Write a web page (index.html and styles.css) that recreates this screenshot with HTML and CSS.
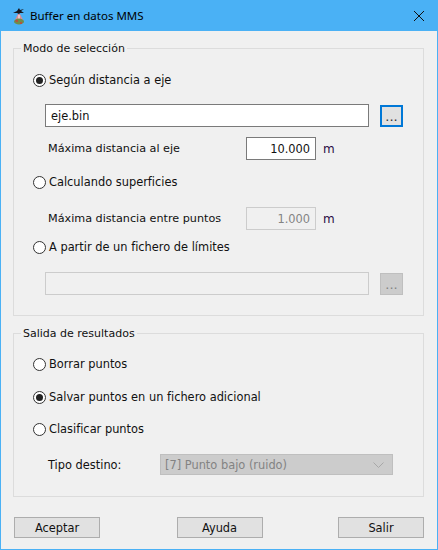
FILE: index.html
```html
<!DOCTYPE html>
<html lang="es">
<head>
<meta charset="utf-8">
<title>Buffer en datos MMS</title>
<link rel="stylesheet" href="styles.css">
</head>
<body>
<div class="window">
  <header class="titlebar">
    <svg class="app-icon" width="16" height="18" viewBox="0 0 16 18">
      <path d="M2 6 L6 4 L8 1 L9 3 L13 2 L10 4 L13 6 L9 6 L8 7 L6 6 Z" fill="#16161c"/>
      <path d="M7 7 L9 7 L12 13 L4 13 Z" fill="#dc8c96"/>
      <path d="M7 8 L9 8 L9 12 L7 12 Z" fill="#e8c4c8"/>
      <ellipse cx="8" cy="14.5" rx="5" ry="3" fill="#6f8c4a"/>
      <path d="M4 13 h3 v2 h-2 Z M9 15 h2 v2 h-2 Z" fill="#b5533c"/>
    </svg>
    <span class="title">Buffer en datos MMS</span>
    <svg class="close" width="12" height="12" viewBox="0 0 12 12">
      <path d="M1 1 L11 11 M11 1 L1 11" stroke="#111" stroke-width="1" fill="none"/>
    </svg>
  </header>
  <main class="content">
    <section class="group group-mode">
      <span class="legend">Modo de selección</span>
      <label class="radio-row first"><span class="radio on"></span>Según distancia a eje</label>
      <div class="file-row after-radio-a"><input class="text file" value="eje.bin"><button class="dots focus">...</button></div>
      <div class="value-row dist-a"><span class="value-label">Máxima distancia al eje</span><input class="text number" value="10.000"><span class="unit">m</span></div>
      <label class="radio-row calc"><span class="radio"></span>Calculando superficies</label>
      <div class="value-row dist-b"><span class="value-label">Máxima distancia entre puntos</span><input class="text number disabled" value="1.000" disabled><span class="unit">m</span></div>
      <label class="radio-row limits"><span class="radio"></span>A partir de un fichero de límites</label>
      <div class="file-row after-radio-b"><input class="text file disabled" disabled><button class="dots off" disabled>...</button></div>
    </section>
    <section class="group group-out">
      <span class="legend">Salida de resultados</span>
      <label class="radio-row first-out"><span class="radio"></span>Borrar puntos</label>
      <label class="radio-row save"><span class="radio on"></span>Salvar puntos en un fichero adicional</label>
      <label class="radio-row classify"><span class="radio"></span>Clasificar puntos</label>
      <div class="type-row">
        <span class="type-label">Tipo destino:</span>
        <div class="combo"><span>[7] Punto bajo (ruido)</span>
          <svg width="11" height="6" viewBox="0 0 11 6"><path d="M0.5 0.5 L5.5 5.5 L10.5 0.5" stroke="#a8a8a8" fill="none"/></svg>
        </div>
      </div>
    </section>
    <footer class="actions">
      <button class="action">Aceptar</button>
      <button class="action middle">Ayuda</button>
      <button class="action">Salir</button>
    </footer>
  </main>
</div>
</body>
</html>
```
FILE: styles.css
```css
* { box-sizing: border-box; }
html, body { margin: 0; padding: 0; }
body { width: 438px; height: 550px; overflow: hidden; font-family: "DejaVu Sans", sans-serif; font-size: 11.4px; color: #111; }
.window { width: 438px; height: 550px; display: flex; flex-direction: column; border: 1px solid #4ab1f5; border-top: 0; background: #f0f0f0; }
.titlebar { height: 31px; flex: none; background: #4ab1f5; display: flex; align-items: center; padding: 0 10px 0 11px; margin: 0 -1px; }
.app-icon { flex: none; margin-right: 3px; }
.title { flex: 1; font-family: "Noto Sans", sans-serif; font-size: 11.5px; color: #000; }
.close { flex: none; margin-right: 3px; }
.content { flex: 1; padding: 17px 13px 0 12px; display: flex; flex-direction: column; }
.group { position: relative; border: 1px solid #dcdcdc; width: 411px; flex: none; }
.group-mode { height: 268px; padding: 23px 0 0 19px; }
.group-out { height: 164px; margin-top: 17px; padding: 22px 0 0 19px; }
.legend { position: absolute; left: 7px; top: -8px; padding: 0 2px; height: 15px; line-height: 15px; background: #f0f0f0; font-size: 11px; }
.radio-row { display: flex; align-items: center; height: 16px; }
.radio { width: 13px; height: 13px; border-radius: 50%; border: 1px solid #333; background: #fff; margin-right: 3px; display: flex; align-items: center; justify-content: center; flex: none; }
.radio.on::after { content: ""; width: 7px; height: 7px; border-radius: 50%; background: #222; }
.file-row { display: flex; align-items: center; margin-left: 12px; height: 23px; }
.after-radio-a { margin-top: 16px; }
.after-radio-b { margin-top: 17px; }
.text { font: inherit; color: #111; border: 1px solid #7a7a7a; background: #fff; outline: 0; height: 23px; padding: 0 5px; }
.file { width: 324px; }
.dots { font-family: inherit; font-size: 13px; line-height: 1; width: 23px; height: 22px; margin-left: 11px; padding: 2px 0 0; background: #e1e1e1; border: 2px solid #0078d7; color: #333; }
.dots.off { border: 1px solid #bfbfbf; background: #cccccc; color: #838383; }
.value-row { display: flex; align-items: center; margin-left: 15px; height: 23px; }
.dist-a { margin-top: 10px; }
.dist-b { margin-top: 17px; }
.calc { margin-top: 14px; }
.limits { margin-top: 9px; }
.value-label { width: 198px; flex: none; font-size: 11.2px; }
.number { width: 70px; text-align: right; padding-right: 5px; }
.disabled { background: #f0f0f0; border-color: #cccccc; color: #838383; -webkit-text-fill-color: #838383; opacity: 1; }
.unit { margin-left: 7px; color: #2a0a45; font-size: 12px; }
.save { margin-top: 17px; }
.classify { margin-top: 16px; }
.type-row { display: flex; align-items: center; margin-top: 17px; margin-left: 15px; height: 21px; }
.type-label { width: 112px; flex: none; }
.combo { width: 233px; height: 21px; background: #cccccc; border: 1px solid #bfbfbf; color: #838383; display: flex; align-items: center; justify-content: space-between; padding: 0 8px 0 4px; }
.actions { display: flex; justify-content: space-between; margin-top: 20px; padding-left: 1px; width: 411px; }
.action { font: inherit; width: 86px; height: 21px; padding: 0; background: #e1e1e1; border: 1px solid #adadad; color: #111; }
.middle { margin-left: 1px; }
```
